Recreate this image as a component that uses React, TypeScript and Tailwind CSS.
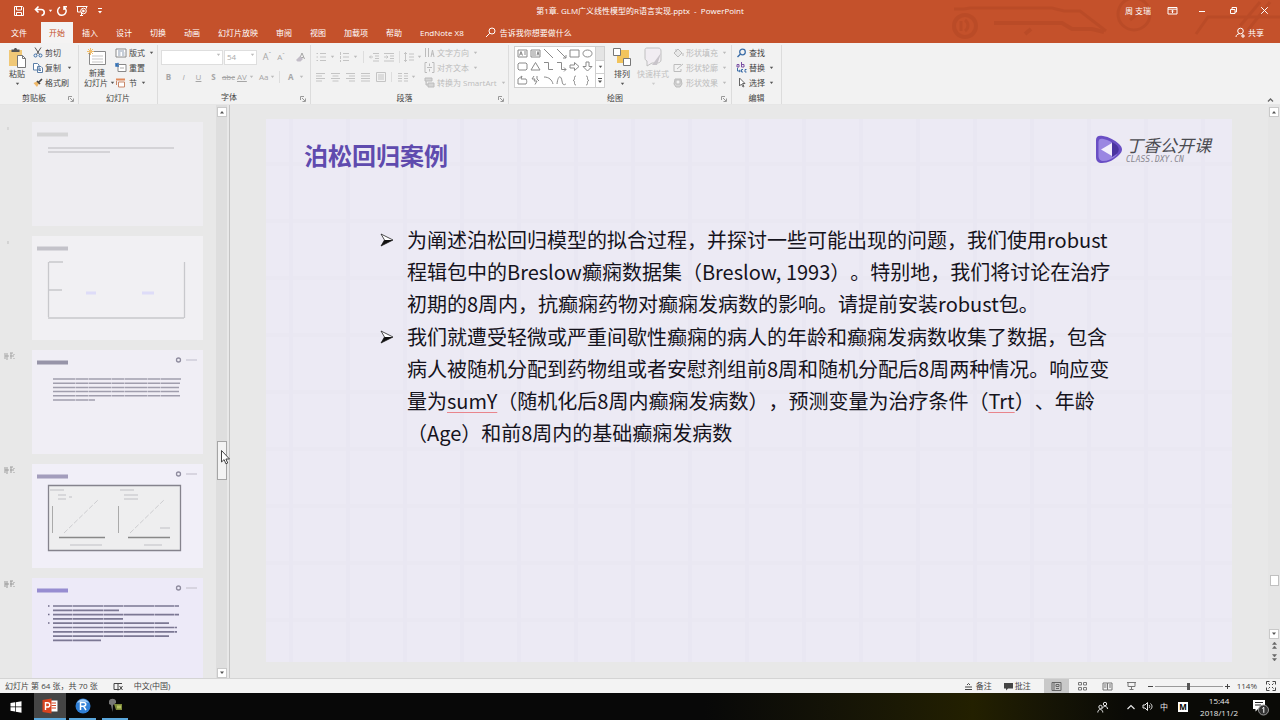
import React from 'react';

type Kids = { children?: React.ReactNode; className?: string };

function Ico({ w = 12, h = 12, className = '', children }: Kids & { w?: number; h?: number }) {
  return (
    <svg
      width={w}
      height={h}
      viewBox={`0 0 ${w} ${h}`}
      fill="none"
      stroke="currentColor"
      strokeWidth="1"
      className={'shrink-0 ' + className}
      aria-hidden="true"
    >
      {children}
    </svg>
  );
}

function Caret({ className = 'text-[#555]' }: { className?: string }) {
  return (
    <Ico w={5} h={4} className={className}>
      <path d="M0.800 0.800h3.400L2.500 3z" fill="currentColor" stroke="none" />
    </Ico>
  );
}

function TitleBar() {
  return (
    <div className="grid h-[21px] grid-cols-[1fr_auto_1fr] items-center">
      <div className="flex items-center pl-[13px]">
        <button aria-label="保存" className="mr-[9px]">
          <Ico>
            <path d="M1.500 1.500h8l1 1v8h-9zM3.500 1.500v3.500h5V1.500M3.500 10.500V7.500h5v3" />
          </Ico>
        </button>
        <button aria-label="撤消" className="mr-[2px]">
          <Ico>
            <path d="M4.500 1.500L1.500 4.500l3 3M2 4.500h5.200c4 0 4 5.500 0.300 6" strokeWidth="1.600" />
          </Ico>
        </button>
        <button aria-label="撤消选项" className="mr-[3px]"><Caret className="text-white" /></button>
        <button aria-label="恢复" className="mr-[8px]">
          <Ico>
            <path d="M4 2.200A4.300 4.300 0 1 0 8 2.300M8 5V1.800h3" strokeWidth="1.500" />
          </Ico>
        </button>
        <button aria-label="从头开始放映" className="mr-[9px]">
          <Ico>
            <path d="M0.500 1.500h11M1.500 1.500v5.500h3M10.500 1.500v2M4 10.500h3M5.500 7v3" />
            <circle cx="7.500" cy="6" r="2.800" />
            <path d="M6.800 4.800v2.400l1.800-1.200z" fill="currentColor" />
          </Ico>
        </button>
        <button aria-label="自定义快速访问工具栏">
          <Ico w={6} h={8}>
            <path d="M1 1.500h4" />
            <path d="M1 4h4L3 6.500z" fill="currentColor" stroke="none" />
          </Ico>
        </button>
      </div>
      <h1 className="whitespace-pre">第1章. GLM广义线性模型的R语言实现.pptx  -  PowerPoint</h1>
      <div className="flex items-center justify-end pr-[11px]">
        <span className="mr-[16px]">周 支瑞</span>
        <button aria-label="功能区显示选项" className="mr-[20px]">
          <Ico w={11} h={9}>
            <path d="M1 1.500h9v6.500H1zM1 3.200h9M5.500 7V4.500M4.200 5.500l1.300-1.300 1.300 1.300" />
          </Ico>
        </button>
        <button aria-label="最小化" className="mr-[23px]"><Ico w={8} h={8}><path d="M1 4.500h6" /></Ico></button>
        <button aria-label="还原" className="mr-[22px]">
          <Ico w={9} h={9}><path d="M1.500 3.500h4.500v4h-4.500zM3 3.500v-2h4.500v4.500h-1.500" /></Ico>
        </button>
        <button aria-label="关闭"><Ico w={9} h={9}><path d="M1.200 1.200l6.600 6.600M7.800 1.200l-6.600 6.600" /></Ico></button>
      </div>
    </div>
  );
}

const tabs = ['插入', '设计', '切换', '动画', '幻灯片放映', '审阅', '视图', '加载项', '帮助', 'EndNote X8'];

function Header() {
  return (
    <header className="relative bg-[#c4512b] text-white">
      <svg className="absolute right-0 top-0 h-[42px] w-[340px]" viewBox="0 0 340 42" fill="none" stroke="#a8401f" strokeWidth="3" opacity="0.32" aria-hidden="true">
        <circle cx="25" cy="26" r="11" strokeWidth="4" />
        <path d="M21 21v10M25 20c4 3 4 8 0 11" />
        <path d="M14 9h10l6-1h82l12 3h16l26 20" />
        <path d="M54 23h68l10 6h20l12 3M85 34l6-5" strokeWidth="4" />
        <circle cx="194" cy="14" r="16" />
        <path d="M190 20l10-8M256 34l12-17h72M308 30l22-28M300 26l20-24" />
      </svg>
      <div className="relative">
        <TitleBar />
        <nav className="flex h-[22px] items-stretch justify-between pt-px">
          <div className="flex">
            <button className="pl-[11px] pr-[14px]">文件</button>
            <button className="bg-[#f4f3f3] px-2 text-[#c4512b]">开始</button>
            {tabs.map((t) => (
              <button key={t} className="whitespace-nowrap px-[9px]">{t}</button>
            ))}
            <button className="flex items-center gap-1 pl-[12px]">
              <Ico w={11} h={11}>
                <circle cx="7" cy="4" r="3" />
                <path d="M4.800 6.200L1 10" />
              </Ico>
              告诉我你想要做什么
            </button>
          </div>
          <button className="flex items-center gap-0.5 pr-[16px]">
            <Ico w={11} h={11}>
              <circle cx="5.500" cy="4" r="2.800" />
              <path d="M1 10c0-2 1.500-3 3.500-3.300M6.500 6.700l1 0.600M6 9h4M8 7v4" />
            </Ico>
            共享
          </button>
        </nav>
      </div>
    </header>
  );
}

function Group({ label, className = '', launcher = false, children }: Kids & { label: string; launcher?: boolean }) {
  return (
    <section aria-label={label} className={'flex shrink-0 flex-col border-r border-[#dcdcdc] ' + className}>
      <div className="flex h-[45px]">{children}</div>
      <div className="flex h-[15px] items-center pt-px">
        <span className="flex-1 text-center">{label}</span>
        {launcher && (
          <button aria-label={label + '设置'} className="w-[10px] self-end pb-[2px] text-[#999]">
            <Ico w={6} h={6}><path d="M0.500 4V0.500H4M2 2l3 3M5.500 2.500v3h-3" /></Ico>
          </button>
        )}
      </div>
    </section>
  );
}

function Row({ icon, text, caret = false, dim = false }: { icon: React.ReactNode; text: string; caret?: boolean; dim?: boolean }) {
  return (
    <button className={'flex h-[15px] items-center gap-[2px] whitespace-nowrap ' + (dim ? 'text-[#bcbcbc]' : '')}>
      {icon}
      {text}
      {caret && <Caret className={dim ? 'ml-[2px] text-[#bbb]' : 'ml-[2px] text-[#555]'} />}
    </button>
  );
}

function ClipboardGroup() {
  return (
    <Group label="剪贴板" launcher className="w-[79px]">
      <button className="flex w-[33px] flex-col items-center pl-[1px] pt-[2px] leading-[10px]">
        <Ico w={20} h={22}>
          <path d="M2 3h13v16H2z" fill="#f0c877" stroke="none" />
          <path d="M4.500 5V2.500h2.500c0-2 3-2 3 0h2.500V5z" fill="#555" stroke="none" />
          <path d="M10.500 8.500h5l3 3v9h-8z" fill="#fff" stroke="#777" />
          <path d="M15.500 8.500v3h3" stroke="#777" />
        </Ico>
        粘贴
        <span className="mt-[3px]"><Caret /></span>
      </button>
      <div className="flex flex-col">
        <Row text="剪切" icon={
          <Ico w={10} h={11}>
            <path d="M2 0.500l4.500 7M8 0.500l-4.500 7" stroke="#555" />
            <circle cx="2.500" cy="8.500" r="1.500" stroke="#3c6ea8" />
            <circle cx="7.500" cy="8.500" r="1.500" stroke="#3c6ea8" />
          </Ico>} />
        <div className="flex">
          <Row text="复制" icon={
            <Ico w={10} h={10}>
              <path d="M0.500 0.500h4l1.500 1.500v5h-5.500zM4.500 3.500h3.500l1.500 1.500v4.500h-5z" fill="#fff" stroke="#5b7fa8" />
              <path d="M6 6h2M6 7.500h2" stroke="#5b7fa8" />
            </Ico>} />
          <button aria-label="复制选项" className="pl-[6px]"><Caret /></button>
        </div>
        <Row text="格式刷" icon={
          <Ico w={10} h={10}>
            <path d="M0.500 5l3.500-1.500 2 2L4 9z" fill="#f0b866" stroke="none" />
            <path d="M4 3l3 3M5.500 4.500L9 1" stroke="#444" strokeWidth="1.700" />
          </Ico>} />
      </div>
    </Group>
  );
}

function SlidesGroup() {
  return (
    <Group label="幻灯片" className="w-[79px]">
      <button className="flex w-[36px] flex-col items-center pt-[3px] leading-[10px]">
        <Ico w={20} h={18} className="mb-[2px]">
          <path d="M2.500 3.500h16v13h-16z" fill="#fff" stroke="#8a8a8a" />
          <path d="M5 8h11M5 11h11M5 14h11" stroke="#c5c5c5" />
          <path d="M3.500 0v7M0 3.500h7M1 1l5 5M6 1L1 6" stroke="#efbd6c" />
        </Ico>
        新建
        <span className="flex items-center gap-[2px] whitespace-nowrap pl-[5px]">幻灯片<Caret /></span>
      </button>
      <div className="flex flex-col">
        <Row text="版式" caret icon={
          <Ico w={12} h={10}>
            <path d="M1 1h10v8H1z" fill="#fff" stroke="#888" />
            <path d="M3 3h6M3 5h2.500M7 5h2.500M3 7h2.500M7 7h2.500" stroke="#8c9bb0" />
          </Ico>} />
        <Row text="重置" icon={
          <Ico w={12} h={11}>
            <path d="M3 2.500h8v7H3z" fill="#fff" stroke="#888" />
            <path d="M5 6h4" stroke="#aaa" />
            <path d="M1 3.500L3.500 1M1 1v3h3" stroke="#2f6fb5" strokeWidth="1.400" />
          </Ico>} />
        <Row text="节" caret icon={
          <Ico w={12} h={10}>
            <path d="M1 1.500h9" stroke="#e08a5a" strokeWidth="2" />
            <path d="M3.500 4h6v5h-6zM1.500 3v4" stroke="#c98768" fill="#fff" />
          </Ico>} />
      </div>
    </Group>
  );
}

function FontGroup() {
  const glyph = 'w-[15px] shrink-0 text-center';
  return (
    <Group label="字体" launcher className="w-[153px]">
      <div className="flex flex-col gap-[5px] pl-[3px] pt-[4px] text-[#a6a6a6]">
        <div className="flex h-[16px] items-center">
          <span className="relative mr-[1px] flex">
            <select aria-label="字体名称" className="h-[15px] w-[62px] appearance-none border border-[#dedede] bg-white"></select>
            <span className="pointer-events-none absolute right-[2px] top-[3px]"><Caret className="text-[#bbb]" /></span>
          </span>
          <span className="relative flex">
            <select aria-label="字号" className="h-[15px] w-[33px] appearance-none border border-[#dedede] bg-white pl-[2px] text-[#aaa]">
              <option>54</option>
            </select>
            <span className="pointer-events-none absolute right-[2px] top-[3px]"><Caret className="text-[#bbb]" /></span>
          </span>
          <button aria-label="增大字号" className="ml-[3px] w-[14px] text-[9px]">A<sup>ˆ</sup></button>
          <button aria-label="减小字号" className="mr-[7px] w-[14px]">A<sup>ˇ</sup></button>
          <button aria-label="清除格式">
            <Ico w={12} h={11}>
              <path d="M4 8L7 1l2.500 6M5 5.500h3.500" />
              <path d="M1 8l4-4 3 3-2.500 2.500h-3z" fill="#c3bdc8" stroke="none" />
            </Ico>
          </button>
        </div>
        <div className="flex h-[14px] items-center">
          <button className={glyph + ' font-bold'}>B</button>
          <button className={glyph + ' italic'}>I</button>
          <button className={glyph + ' underline'}>U</button>
          <button className={glyph + ' font-bold'}>S</button>
          <button className={glyph + ' line-through'}>abc</button>
          <button className="ml-[1px] flex w-[22px] items-center gap-[2px]"><span className="underline">AV</span><Caret className="text-[#bbb]" /></button>
          <button className="flex w-[20px] items-center gap-[1px]">Aa<Caret className="text-[#bbb]" /></button>
          <span className="h-[12px] w-[9px] border-l border-[#ddd]" />
          <button className="flex items-center gap-[5px] font-bold">A<Caret className="text-[#bbb]" /></button>
        </div>
      </div>
    </Group>
  );
}

function Lines({ kind }: { kind: string }) {
  const d: Record<string, string> = {
    bullets: 'M0.500 1.500h1.500M0.500 5h1.500M0.500 8.500h1.500M4 1.500h6M4 5h6M4 8.500h6',
    numbers: 'M1.500 0v3M1.500 4v3M1.500 8v2M4 1.500h6M4 5h6M4 8.500h6',
    outdent: 'M4 1.500h6M6 4h4M6 6.500h4M4 9h6M4 5H0.500M2 3.500L0.500 5 2 6.500',
    indent: 'M0 1.500h10M6 4h4M6 6.500h4M0 9h10M0 5h4M2.500 3.500L4 5 2.500 6.500',
    left: 'M0 1.500h9M0 4h6M0 6.500h9M0 9h6',
    center: 'M0 1.500h9M1.500 4h6M0 6.500h9M1.500 9h6',
    right: 'M0 1.500h9M3 4h6M0 6.500h9M3 9h6',
    justify: 'M0 1.500h9M0 4h9M0 6.500h9M0 9h9',
    spread: 'M0.500 0.500h9v9h-9zM2 3h6M2 5h6M2 7h6',
    spacing: 'M1.500 0v10M0 2l1.500-1.500L3 2M0 8l1.500 1.500L3 8M5 2h5M5 5h5M5 8h5',
    columns: 'M0 1.500h4M0 4h4M0 6.500h4M0 9h4M6 1.500h4M6 4h4M6 6.500h4M6 9h4',
  };
  return <Ico w={10} h={10}><path d={d[kind]} /></Ico>;
}

function ParagraphGroup() {
  return (
    <Group label="段落" launcher className="w-[198px]">
      <div className="flex w-[113px] flex-col gap-[8px] pl-[5px] pt-[6px] text-[#c4c4c4]">
        <div className="flex h-[12px] items-center">
          <button aria-label="项目符号" className="flex items-center gap-[4px]"><Lines kind="bullets" /><Caret className="text-[#bbb]" /></button>
          <button aria-label="编号" className="ml-[4px] flex items-center gap-[4px]"><Lines kind="numbers" /><Caret className="text-[#bbb]" /></button>
          <span className="ml-[5px] h-[12px] w-[6px] border-l border-[#ddd]" />
          <button aria-label="降低列表级别" className="mr-[5px]"><Lines kind="outdent" /></button>
          <button aria-label="提高列表级别"><Lines kind="indent" /></button>
          <span className="ml-[5px] h-[12px] w-[5px] border-l border-[#ddd]" />
          <button aria-label="行距" className="flex items-center gap-[3px]"><Lines kind="spacing" /><Caret className="text-[#bbb]" /></button>
        </div>
        <div className="flex h-[12px] items-center gap-[5px]">
          {['left', 'center', 'right', 'justify', 'spread'].map((k) => (
            <button key={k} aria-label={k}><Lines kind={k} /></button>
          ))}
          <button aria-label="分栏" className="flex items-center gap-[3px] border-l border-[#ddd] pl-[6px]"><Lines kind="columns" /><Caret className="text-[#bbb]" /></button>
        </div>
      </div>
      <div className="flex flex-col">
        <Row dim caret text="文字方向" icon={<Ico w={11} h={11}><path d="M1.500 1v9M4.500 1v9M7 10l1.500-7L10 10M7.500 7h2" /></Ico>} />
        <Row dim caret text="对齐文本" icon={<Ico w={11} h={11}><path d="M3 0.500H1v10h2M8 0.500h2v10H8M3 5.500h5M5.500 1.500v2.500M5.500 7v2.500" /></Ico>} />
        <Row dim caret text="转换为 SmartArt" icon={<Ico w={11} h={11}><path d="M1 1h7v3H1zM4 6h6v4H4zM2 4v4h2" fill="#d5d5d5" /></Ico>} />
      </div>
    </Group>
  );
}

const shapes: string[] = [
  'M1 2h9v7H1zM2.500 7.500l1.500-4 1.500 4M3 6h2M7 4h2M7 6h2',
  'M1 2h9v7H1zM3 3v5M5 3v5M7 7.500l1-4 1 4',
  'M1 1l9 9',
  'M1 1l9 9M10 7v3H7',
  'M1 2h9v7H1z',
  'M5.500 2c6 0 6 7 0 7s-6-7 0-7z',
  'M2 2h7l1 1v5l-1 1H2L1 8V3z',
  'M5.500 1.500L10 9H1z',
  'M1 1.500h4.500v7H10',
  'M1 1.500h4.500v7H10M8 6.500l2 2-2 2',
  'M1 4h4.500V1.500L10 5.500 5.500 9.500V7H1z',
  'M4 1h3v4.500h3L5.500 10 1 5.500h3z',
  'M1 9V4l4-3-1 3h5c1 2 1 3 0 5z',
  'M4 1L2 4h3L4 6h3L5 9.500M7 1v3l2 2',
  'M1 2c5 0 8 3 9 7',
  'M1 9c1-9 4-9 5-3s3 3 4 3',
  'M7 1c-3 0 0 4-3 4.500 3 0 0 4.500 3 4.500',
  'M4 1c3 0 0 4 3 4.500-3 0 0 4.500-3 4.500',
];

function DrawingGroup() {
  return (
    <Group label="绘图" launcher className="w-[223px]">
      <div className="ml-[5px] mt-[1px] flex h-[42px] border border-[#cfcfcf] bg-white text-[#8a8a8a]">
        <div className="grid grid-cols-6 gap-x-[2px] px-[2px]">
          {shapes.map((d, i) => (
            <button key={i} aria-label={'形状 ' + (i + 1)} className="flex items-center"><Ico w={11} h={11}><path d={d} /></Ico></button>
          ))}
        </div>
        <div className="flex w-[9px] flex-col border-l border-[#cfcfcf]">
          <button aria-label="上一行" className="flex flex-1 items-center justify-center bg-[#e4e4e4]" />
          <button aria-label="下一行" className="flex flex-1 items-center justify-center border-y border-[#cfcfcf]"><Caret /></button>
          <button aria-label="更多形状" className="flex flex-1 items-center justify-center"><Ico w={6} h={7}><path d="M1 1.500h4" stroke="#555" /><path d="M1 3.500h4L3 6z" fill="#555" stroke="none" /></Ico></button>
        </div>
      </div>
      <button className="ml-[5px] flex w-[24px] flex-col items-center pt-[2px] leading-[10px]">
        <Ico w={20} h={20} className="mb-[2px]">
          <path d="M5 3h12v13H5z" fill="#f2c45c" stroke="none" />
          <path d="M1.500 1.500h7v7h-7zM11.500 11.500h7v7h-7z" fill="#fff" stroke="#777" />
        </Ico>
        排列
        <span className="mt-[3px]"><Caret /></span>
      </button>
      <button className="flex w-[38px] flex-col items-center pt-[2px] leading-[10px] text-[#c0c0c0]">
        <Ico w={20} h={20} className="mb-[2px]">
          <path d="M2 2.500c0-1 1-1.500 2-1.500h11c2 0 3 1 3 3v9c0 2-2 3-4 3H9l-5 3v-5c-2-1-2-2-2-4z" fill="#f1edf2" />
          <path d="M18 6l-6 8-3 4h5z" fill="#c8c4ca" stroke="none" />
        </Ico>
        快速样式
        <span className="mt-[3px]"><Caret className="text-[#ccc]" /></span>
      </button>
      <div className="flex flex-col pl-[1px]">
        <Row dim caret text="形状填充" icon={<Ico w={11} h={10}><path d="M1 5l4-4 4 4-4 4zM10 5v3M3 1v3" fill="#e8e8e8" /></Ico>} />
        <Row dim caret text="形状轮廓" icon={<Ico w={11} h={10}><path d="M8 1.500H1v7h7V6M4 6l6-5" /></Ico>} />
        <Row dim caret text="形状效果" icon={<Ico w={11} h={10}><path d="M2 1h6l1 5-2 3H3L1 6z" fill="#d6d6d6" /><path d="M3 2h4v4H3z" fill="#f3f3f3" /></Ico>} />
      </div>
    </Group>
  );
}

function Ribbon() {
  return (
    <div className="flex h-[62px] shrink-0 border-b border-[#e6e6e6] bg-[#f2f2f2] pt-[2px] text-[#444]">
      <ClipboardGroup />
      <SlidesGroup />
      <FontGroup />
      <ParagraphGroup />
      <DrawingGroup />
      <Group label="编辑" className="w-[50px]">
        <div className="flex flex-col pl-[4px]">
          <Row text="查找" icon={<Ico w={11} h={10}><circle cx="6.500" cy="4" r="2.800" stroke="#3c6ea8" strokeWidth="1.300" /><path d="M4.500 6L1.500 9" stroke="#3c6ea8" strokeWidth="1.500" /></Ico>} />
          <Row caret text="替换" icon={
            <Ico w={11} h={11}>
              <path d="M1 2.500h2v2.500H1zM5.500 0v5h2.500V2.500H5.500" stroke="#7a4fa3" />
              <path d="M1.500 6v3h2M3 8l1.500 1L3 10M7 7.500H5.500V10H7M10.500 7.500H9V10h1.500" stroke="#3c6ea8" />
            </Ico>} />
          <Row caret text="选择" icon={<Ico w={11} h={11}><path d="M3.500 1v8l2-2 1.500 3 1-0.500-1.500-3h2.500z" stroke="#666" fill="#fff" /></Ico>} />
        </div>
      </Group>
      <div className="flex flex-1 items-end justify-end pb-[1px] pr-[5px]">
        <button aria-label="折叠功能区"><Ico w={9} h={6} className="text-[#666]"><path d="M2 4.500l2.500-2.500L7 4.500" strokeWidth="1.300" /></Ico></button>
      </div>
    </div>
  );
}

function ArrowButton({ up = false, label }: { up?: boolean; label: string }) {
  return (
    <button aria-label={label} className="flex h-[10px] w-[10px] shrink-0 items-center justify-center border border-[#c9c9c9] bg-white text-[#555]">
      <Ico w={6} h={4}>
        <path d={up ? 'M1 3.500h4L3 1z' : 'M1 0.500h4L3 3z'} fill="currentColor" stroke="none" />
      </Ico>
    </button>
  );
}

function textRows(x: number, y: number, widths: number[], gap: number) {
  return widths.map((w, i) => `M${x} ${y + i * gap}h${w}`).join('');
}

function Thumb({ kind }: { kind: number }) {
  const opacity = ['opacity-40', 'opacity-50', 'opacity-80', 'opacity-90', ''][kind];
  const tint = ['bg-[#eeedf1]', 'bg-[#f1f0f3]', 'bg-[#f0eef5]', 'bg-[#f1eff8]', 'bg-[#edeaf8]'][kind];
  const title = ['#c5c5c5', '#a5a3ad', '#8d8aa0', '#9a94b5', '#8d83cc'][kind];
  return (
    <li className="flex">
      <span className="w-[32px] shrink-0 pl-[4px] pt-[2px] text-[#999]">
        <Ico w={12} h={9} className={opacity}>
          {kind > 1 && <path d="M1 1v6M3 1v7M1 4h4M6 1h3M6 4h4M7 1v6M10 2v1M10 6v1" />}
          {kind < 2 && <path d="M4 3v3" />}
        </Ico>
      </span>
      <button aria-label={'幻灯片缩略图 ' + (kind + 1)} className={'h-[104px] w-[171px] ' + tint}>
        <svg viewBox="0 0 171 104" className="h-full w-full" fill="none" aria-hidden="true">
          <path d="M5 12.500h31" stroke={title} strokeWidth="4" opacity={kind < 2 ? 0.6 : 0.9} />
          {kind > 1 && <circle cx="146.500" cy="10" r="2" stroke="#8f8c9f" strokeWidth="1.300" />}
          {kind > 1 && <path d="M154 10h11" stroke="#cfcdd8" strokeWidth="1.500" />}
          {kind === 0 && <path d={textRows(16, 26, [126, 62], 4)} stroke="#bcbcc0" strokeWidth="1.500" opacity="0.7" />}
          {kind === 1 && (
            <g>
              <path d="M16.500 26v55M152.500 26v56M16 82h136M17 26h14M16 54h14" stroke="#c8c8cc" strokeWidth="1.300" />
              <path d="M54 57h10M110 57h12" stroke="#dedcf8" strokeWidth="3" />
            </g>
          )}
          {kind === 2 && <path d={textRows(21, 29, [128, 127, 126, 126, 127, 42], 4.2)} stroke="#a09ead" strokeWidth="1.500" strokeDasharray="22 0.500 13 0.500" />}
          {kind === 3 && (
            <g>
              <path d="M16.500 21.500h132v65h-132z" fill="#eeeeef" stroke="#85838d" strokeWidth="1.300" />
              <path d="M27 73.500h46M96 73.500h42" stroke="#888" strokeWidth="1.600" />
              <path d="M20.500 42v27M86.500 42v27" stroke="#aaa" />
              <path d="M32 69l34-33M98 69l34-33" stroke="#cdcdd0" strokeDasharray="5 2" />
              <path d="M26 31h8M26 35h8M37 33h3M92 31h14M92 35h14M128 64h10M38 81h32M112 81h18M18 26h14M88 26h14" stroke="#c0c0c5" />
            </g>
          )}
          {kind === 4 && (
            <g>
              <path d={textRows(21, 28, [126, 66, 126, 70, 116, 124, 124, 116, 48], 4.3)} stroke="#6f6b88" strokeWidth="1.700" strokeDasharray="19 0.500 31 0.500" opacity="0.9" />
              <path d="M16 28h1.500M16 36.600h1.500M16 45h1.500" stroke="#6f6b88" strokeWidth="1.500" />
            </g>
          )}
        </svg>
      </button>
    </li>
  );
}

function ThumbPane() {
  return (
    <aside className="flex w-[230px] shrink-0 border-r border-[#c4c4c4] bg-[#e8e8e8]">
      <ol className="flex min-h-0 w-[216px] shrink-0 flex-col gap-[10px] overflow-hidden pt-[17px]">
        {[0, 1, 2, 3, 4].map((k) => <Thumb key={k} kind={k} />)}
      </ol>
      <div className="flex w-[11px] flex-col items-center bg-[#dedede] pt-[2px]">
        <ArrowButton up label="向上滚动缩略图" />
        <div className="flex-[324]" />
        <div className="relative h-[39px] w-[10px] border border-[#a5a5a5] bg-[#f3f3f3]">
          <svg className="absolute left-[3px] top-[8px] h-[15px] w-[10px]" viewBox="0 0 10 15" aria-hidden="true">
            <path d="M0.500 0.500v11.500l2.600-2.400 1.800 4.200 1.800-0.800-1.800-4h3.600z" fill="#fff" stroke="#444" />
          </svg>
        </div>
        <div className="flex-[188]" />
        <ArrowButton label="向下滚动缩略图" />
      </div>
    </aside>
  );
}

function Bullet({ children }: Kids) {
  return (
    <li className="flex">
      <span className="w-[27px] shrink-0 pt-[9px]">
        <svg width="14" height="14" viewBox="0 0 14 14" aria-hidden="true">
          <path d="M1 1l12 6L1 13l3.500-6z" fill="#fff" stroke="#222" strokeWidth="0.800" />
          <path d="M4.500 7H13L1 13z" fill="#111" />
        </svg>
      </span>
      <p className="whitespace-nowrap">{children}</p>
    </li>
  );
}

const spell = 'underline decoration-[#e9858c] decoration-1 underline-offset-3';

function Slide() {
  return (
    <article className="relative aspect-[16/9] w-full bg-[#eceaf4] bg-[linear-gradient(to_right,#e9e7f2_4px,transparent_4px),linear-gradient(to_bottom,#eae8f2_4px,transparent_4px)] bg-[length:57px_57px] bg-[position:23px_43px] font-['Noto_Sans_CJK_SC',sans-serif]">
      <div className="flex items-start justify-between pl-[38px] pr-[21px] pt-[15px]">
        <h2 className="pt-[3px] text-[24px] font-bold leading-[36px] text-[#5f4bae]">泊松回归案例</h2>
        <div className="flex items-start gap-[3px]">
          <svg width="29" height="30" viewBox="0 0 29 30" aria-hidden="true">
            <path d="M2 6C2 2 5 1 9 2c6 1 12 4 16 8 4 4 4 7 0 11-5 5-11 8-17 8-4 0-6-2-6-6z" fill="#6a4fc4" />
            <path d="M4.500 8c0-3 2-4 5-3 5 1 9 3 13 7v9c-4 4-9 6-13 6-3 0-5-2-5-5z" fill="#9a86e2" />
            <path d="M18 8c9 4 9 11 0 15z" fill="#4b34a0" />
            <path d="M18 9v13L7 15.500z" fill="#f3effc" />
          </svg>
          <div className="italic text-[#4a4a50]">
            <div className="text-[17px] leading-[22px]">丁香公开课</div>
            <div className="font-['DejaVu_Sans_Mono',monospace] text-[8px] leading-[8px] text-[#8a8890]">CLASS.DXY.CN</div>
          </div>
        </div>
      </div>
      <ul className="flex flex-col gap-px pl-[114px] pt-[51px] text-[20px] leading-[32px] text-[#15131c] [text-spacing-trim:space-all]">
        <Bullet>
          为阐述泊松回归模型的拟合过程，并探讨一些可能出现的问题，我们使用robust<br />
          程辑包中的Breslow癫痫数据集（Breslow, 1993）。特别地，我们将讨论在治疗<br />
          初期的8周内，抗癫痫药物对癫痫发病数的影响。请提前安装robust包。
        </Bullet>
        <Bullet>
          我们就遭受轻微或严重间歇性癫痫的病人的年龄和癫痫发病数收集了数据，包含<br />
          病人被随机分配到药物组或者安慰剂组前8周和随机分配后8周两种情况。响应变<br />
          量为<span className={spell}>sumY</span>（随机化后8周内癫痫发病数），预测变量为治疗条件（<span className={spell}>Trt</span>）、年龄<br />
          （Age）和前8周内的基础癫痫发病数
        </Bullet>
      </ul>
    </article>
  );
}

function Workspace() {
  return (
    <div className="flex min-h-0 flex-1 bg-[#e8e8e8]">
      <ThumbPane />
      <main className="min-w-0 flex-1 pl-[36px] pr-[36px] pt-[14px]">
        <Slide />
      </main>
      <div className="flex w-[12px] shrink-0 flex-col items-center bg-[#e5e5e5] pt-[2px] text-[#666]">
        <ArrowButton up label="向上滚动" />
        <div className="flex-[458]" />
        <div className="h-[11px] w-[9px] border border-[#c0c0c0] bg-white" />
        <div className="flex-[43]" />
        <ArrowButton label="向下滚动" />
        <button aria-label="上一张幻灯片" className="mt-[2px]"><Ico w={7} h={9}><path d="M1.500 3.500h4L3.500 1zM1.500 7.500h4L3.500 5z" fill="currentColor" strokeWidth="0.500" /></Ico></button>
        <button aria-label="下一张幻灯片" className="mb-[16px] mt-[3px]"><Ico w={7} h={9}><path d="M1.500 1.500h4L3.500 4zM1.500 5.500h4L3.500 8z" fill="currentColor" strokeWidth="0.500" /></Ico></button>
      </div>
    </div>
  );
}

function StatusBar() {
  return (
    <footer className="flex h-[15px] shrink-0 items-center justify-between border-t border-[#d4d4d4] bg-[#f3f3f3] text-[#444]">
      <div className="flex items-center pl-[5px]">
        <span className="whitespace-pre">幻灯片 第 64 张，共 70 张</span>
        <button aria-label="拼写检查" className="ml-[15px] mr-[10px]">
          <Ico w={11} h={9}><path d="M5 1.500H1v6h4M5 1v7.500M5 1.500h4M5 7.500h1.500M6.500 4l3 4M9.500 4l-3 4" /></Ico>
        </button>
        <span>中文(中国)</span>
      </div>
      <div className="flex h-full items-center pr-[4px]">
        <button className="mr-[11px] flex items-center gap-[3px]">
          <Ico w={9} h={9}><path d="M3 3l1.500-1.500L6 3M1 5h7M1 7.500h7" /></Ico>备注
        </button>
        <button className="mr-[13px] flex items-center gap-[1px]">
          <Ico w={11} h={9}><path d="M1 1h9v5.500H5L3 8.500V6.500H1z" fill="currentColor" stroke="none" /></Ico>批注
        </button>
        <button aria-label="普通视图" className="mr-[8px] flex h-full w-[25px] items-center justify-center bg-[#c9c9c9] text-[#666]">
          <Ico w={11} h={9}><path d="M1 0.500h9v8H1zM3 0.500v8M5 2.500h3v2H5zM5 6.500h3" /></Ico>
        </button>
        <button aria-label="幻灯片浏览" className="mr-[14px] text-[#777]"><Ico w={11} h={10}><path d="M1.500 1.500h3v2.500h-3zM6.500 1.500h3v2.500h-3zM1.500 6.500h3V9h-3zM6.500 6.500h3V9h-3z" /></Ico></button>
        <button aria-label="阅读视图" className="mr-[13px] text-[#777]"><Ico w={11} h={9}><path d="M1 1h4.500v7H1zM5.500 1H10v7H5.500zM2 3h2.500M2 5h2.500M7 3h2M7 5h2" /></Ico></button>
        <button aria-label="幻灯片放映" className="mr-[10px] text-[#777]"><Ico w={11} h={10}><path d="M1 1.500h9M2 1.500v4h7v-4M5.500 5.500v3M3.500 8.500h4" /></Ico></button>
        <button aria-label="缩小"><Ico w={7} h={7}><path d="M1 3.500h5" /></Ico></button>
        <input
          type="range"
          aria-label="缩放"
          min={10}
          max={218}
          defaultValue={114}
          className="mx-[1px] h-[9px] w-[68px] appearance-none bg-transparent [&::-webkit-slider-runnable-track]:h-[1px] [&::-webkit-slider-runnable-track]:bg-[#9a9a9a] [&::-webkit-slider-thumb]:-mt-[3px] [&::-webkit-slider-thumb]:h-[7px] [&::-webkit-slider-thumb]:w-[3px] [&::-webkit-slider-thumb]:appearance-none [&::-webkit-slider-thumb]:bg-[#555]"
        />
        <button aria-label="放大"><Ico w={7} h={7}><path d="M1 3.500h5M3.500 1v5" /></Ico></button>
        <span className="ml-[6px] mr-[9px]">114%</span>
        <button aria-label="适应窗口"><Ico w={10} h={10}><path d="M0.500 3.500v-3h3M6.500 0.500h3v3M9.500 6.500v3h-3M3.500 9.500h-3v-3M2.500 2.500l1.500 1.500M7.500 2.500L6 4M2.500 7.500L4 6M7.500 7.500L6 6" /></Ico></button>
      </div>
    </footer>
  );
}

function TaskBar() {
  const app = 'flex h-full items-center justify-center border-b-2 border-[#5aa7dc]';
  return (
    <footer className="flex h-[27px] shrink-0 items-center justify-between bg-linear-to-r from-[#080808] from-55% via-[#232000] via-76% to-[#0a0a06] to-88% text-[#e8e8e8]">
      <div className="flex h-full items-center">
        <button aria-label="开始菜单" className="px-[10px]">
          <Ico w={12} h={12}><path d="M0.500 2l4.500-0.700v4.200H0.500zM5.700 1.200L11.500 0.300v5.200H5.700zM0.500 6.300H5v4.200L0.500 9.800zM5.700 6.300h5.800v5.400l-5.800-0.900z" fill="#fff" stroke="none" /></Ico>
        </button>
        <button aria-label="PowerPoint" className={app + ' ml-[2px] w-[32px] bg-[#454545]'}>
          <svg width="16" height="16" viewBox="0 0 16 16" aria-hidden="true">
            <path d="M8 2.500h7.500v11H8z" fill="#fff" />
            <path d="M9.500 5h4.500M9.500 7.500h4.500M9.500 10h4.500" stroke="#d24726" strokeWidth="1.200" />
            <path d="M0.500 2l9-1.500v15l-9-1.500z" fill="#d8431f" />
            <path d="M3.500 12V4.800h2c3 0 3 4.200 0 4.200h-2" fill="none" stroke="#fff" strokeWidth="1.400" />
          </svg>
        </button>
        <button aria-label="RStudio" className={app + ' ml-[3px] w-[27px]'}>
          <svg width="16" height="16" viewBox="0 0 16 16" aria-hidden="true">
            <circle cx="8" cy="8" r="7.500" fill="#2f7fd6" />
            <path d="M2 5c3-5 9-5 12 0-4-2-8-2-12 0z" fill="#9fcbf5" />
            <path d="M5.500 12V4.500h3c3 0 3 3.700 0 3.700h-3M8.500 8.200L11 12" fill="none" stroke="#fff" strokeWidth="1.500" />
          </svg>
        </button>
        <button aria-label="录屏工具" className={app + ' ml-[6px] w-[26px]'}>
          <svg width="15" height="16" viewBox="0 0 15 16" aria-hidden="true">
            <path d="M1 3c1-3 6-3 7 0v2L5 7 4.500 14 3 7 1 6z" fill="#777" />
            <path d="M6 6h8v6H8z" fill="#7d8a3a" />
            <path d="M9 7.500h4v3H9z" fill="#b7c163" />
          </svg>
        </button>
      </div>
      <div className="flex h-full items-center pr-[10px]">
        <button aria-label="人脉" className="mr-[17px]">
          <Ico w={12} h={12}><circle cx="3.500" cy="6" r="1.700" /><path d="M0.800 11.500c0-4 5-4 5 0" /><circle cx="8" cy="3" r="1.700" /><path d="M5.500 7.500c0.500-3 5-3 5 0.500" /></Ico>
        </button>
        <button aria-label="显示隐藏的图标" className="mr-[6px]"><Ico w={10} h={8}><path d="M1.500 6L5 2.500 8.500 6" strokeWidth="1.200" /></Ico></button>
        <button aria-label="音量" className="mr-[6px]"><Ico w={12} h={11}><path d="M1 4h2l2.500-2.500v8L3 7H1zM7 4c1 1 1 2 0 3M8.500 2.500c2 2 2 4 0 6" /></Ico></button>
        <button aria-label="输入法中文" className="mr-[10px]">中</button>
        <button aria-label="输入法" className="mr-[12px] h-[10px] w-[10px] bg-white text-center font-bold leading-[10px] text-black">M</button>
        <time className="mr-[14px] text-center leading-[12px]">15:44<br />2018/11/2</time>
        <button aria-label="通知">
          <svg width="18" height="18" viewBox="0 0 18 18" aria-hidden="true">
            <path d="M1 2h12v9H6l-2.500 2.500V11H1z" fill="#fff" />
            <path d="M3 4.500h8M3 7h6" stroke="#222" />
            <circle cx="11.500" cy="12" r="5" fill="#333" stroke="#999" />
            <path d="M10.300 10.500l1.500-1.200v5.500" stroke="#fff" fill="none" />
          </svg>
        </button>
      </div>
    </footer>
  );
}

export default function App() {
  return (
    <div className="flex h-screen flex-col overflow-hidden font-['Open_Sans','Noto_Sans_CJK_SC',sans-serif] text-[8px] leading-[12px]">
      <Header />
      <Ribbon />
      <Workspace />
      <StatusBar />
      <TaskBar />
    </div>
  );
}
